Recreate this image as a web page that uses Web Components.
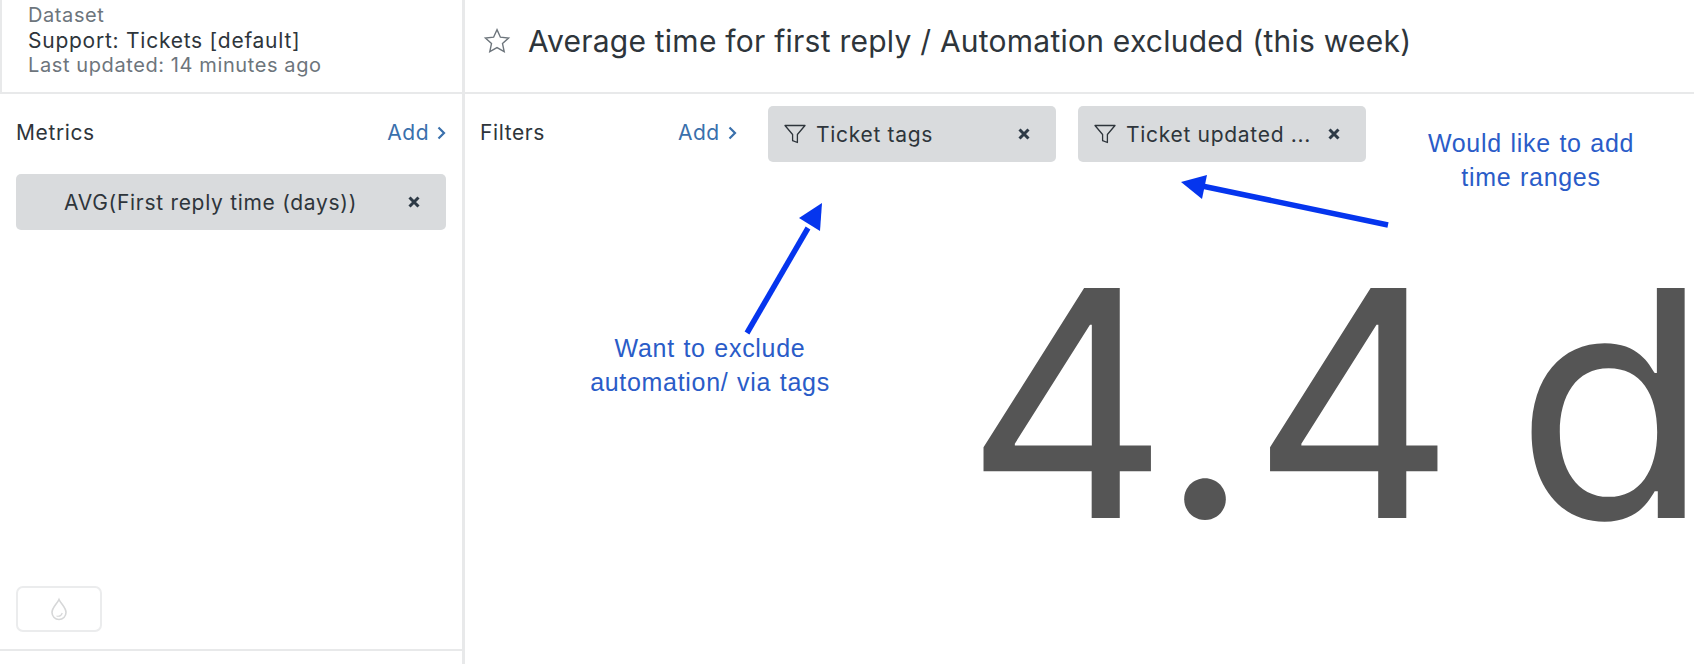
<!DOCTYPE html>
<html>
<head>
<meta charset="utf-8">
<style>
  html, body { margin: 0; height: 100%; background: #fff; overflow: hidden; }
  body { font-family: Inter, "Noto Sans", sans-serif; color: #2e353b; }
</style>
</head>
<body>
<query-page>
  <dataset-info slot="dataset"></dataset-info>
  <question-title slot="title">Average time for first reply / Automation excluded (this week)</question-title>
  <metrics-panel slot="side">
    <metric-chip>AVG(First reply time (days))</metric-chip>
  </metrics-panel>
  <filters-bar slot="main">
    <metric-chip filter>Ticket tags</metric-chip>
    <metric-chip filter>Ticket updated ...</metric-chip>
  </filters-bar>
  <big-value slot="main">4.4 d</big-value>
  <note-overlay slot="notes"></note-overlay>
</query-page>

<script>
const pageTpl = document.createElement('template');
pageTpl.innerHTML = `
<style>
  :host { display: grid; position: relative; width: 1694px; height: 664px; overflow: hidden;
    grid-template-columns: 465px 1fr; grid-template-rows: 94px 1fr; }
  .cell { border: 0 solid #e8e9ea; min-width: 0; min-height: 0; }
  .ds { border-width: 0 3px 2px 2px; }
  .ttl { border-bottom-width: 2px; }
  .side { border-right-width: 3px; display: flex; flex-direction: column; }
  .main { display: flex; flex-direction: column; overflow: hidden; }
</style>
<div class="cell ds"><slot name="dataset"></slot></div>
<div class="cell ttl"><slot name="title"></slot></div>
<div class="cell side"><slot name="side"></slot></div>
<div class="cell main"><slot name="main"></slot></div>
<slot name="notes"></slot>
`;
class QueryPage extends HTMLElement {
  constructor() {
    super();
    this.attachShadow({ mode: 'open' });
    this.shadowRoot.appendChild(pageTpl.content.cloneNode(true));
  }
}
customElements.define('query-page', QueryPage);

const datasetTpl = document.createElement('template');
datasetTpl.innerHTML = `
<style>
  :host { display: block; padding: 3px 0 0 26px; }
  div { font-size: 20px; letter-spacing: 0.6px; line-height: 25px; color: #6d757c; white-space: nowrap; }
  .name { font-size: 21px; letter-spacing: 0.75px; color: #2e353b; }
</style>
<div>Dataset</div>
<div class="name">Support: Tickets [default]</div>
<div>Last updated: 14 minutes ago</div>
`;
class DatasetInfo extends HTMLElement {
  constructor() {
    super();
    this.attachShadow({ mode: 'open' });
    this.shadowRoot.appendChild(datasetTpl.content.cloneNode(true));
  }
}
customElements.define('dataset-info', DatasetInfo);

const titleTpl = document.createElement('template');
titleTpl.innerHTML = `
<style>
  :host { display: flex; align-items: center; height: 82px; padding-left: 18px; gap: 17px; }
  svg { width: 28px; height: 28px; flex: none; }
  span { font-size: 30px; letter-spacing: 0.24px; color: #2e353b; white-space: nowrap; }
</style>
<svg viewBox="0 0 28 28" fill="none" stroke="#6d757c" stroke-width="1.4" stroke-linejoin="miter">
  <path d="M14 2.600l3.400 7.600 8.200.9-6.100 5.500 1.700 8.100-7.200-4.100-7.200 4.100 1.700-8.100-6.100-5.500 8.200-.9z"/>
</svg>
<span><slot></slot></span>
`;
class QuestionTitle extends HTMLElement {
  constructor() {
    super();
    this.attachShadow({ mode: 'open' });
    this.shadowRoot.appendChild(titleTpl.content.cloneNode(true));
  }
}
customElements.define('question-title', QuestionTitle);

const addTpl = document.createElement('template');
addTpl.innerHTML = `
<style>
  :host { display: inline-flex; align-items: center; gap: 8px; font-size: 21px; letter-spacing: 0.5px; color: #3a70ac; }
  svg { width: 9px; height: 14px; margin-top: 2px; }
</style>
<span>Add</span>
<svg viewBox="0 0 9 14" fill="none" stroke="#3a70ac" stroke-width="2.2"><path d="M1.500 1.500L7 7l-5.500 5.500"/></svg>
`;
class AddLink extends HTMLElement {
  constructor() {
    super();
    this.attachShadow({ mode: 'open' });
    this.shadowRoot.appendChild(addTpl.content.cloneNode(true));
  }
}
customElements.define('add-link', AddLink);

const chipTpl = document.createElement('template');
chipTpl.innerHTML = `
<style>
  :host { display: flex; align-items: center; height: 56px; box-sizing: border-box; background: #d9dbdd;
    border-radius: 5px; padding: 0 26px 0 16px; font-size: 21px; letter-spacing: 0.7px; color: #2e353b; white-space: nowrap; }
  .label { flex: 1; }
  svg.funnel { width: 22px; height: 22px; margin-right: 10px; flex: none; }
  svg.close { width: 12px; height: 12px; flex: none; }
  :host(:not([filter])) { padding-left: 48px; }
  :host(:not([filter])) svg.funnel { display: none; }
</style>
<svg class="funnel" viewBox="0 0 22 22" fill="none" stroke="#2e353b" stroke-width="1.3" stroke-linejoin="round">
  <path d="M1 2.500h20l-7.600 9v8l-4.800-1.800v-6.200z"/>
</svg>
<span class="label"><slot></slot></span>
<svg class="close" viewBox="0 0 12 12" stroke="#2e3a46" stroke-width="3"><path d="M1.500 1.500l9 9M10.500 1.500l-9 9"/></svg>
`;
class MetricChip extends HTMLElement {
  constructor() {
    super();
    this.attachShadow({ mode: 'open' });
    this.shadowRoot.appendChild(chipTpl.content.cloneNode(true));
  }
}
customElements.define('metric-chip', MetricChip);

const metricsTpl = document.createElement('template');
metricsTpl.innerHTML = `
<style>
  :host { display: flex; flex-direction: column; flex: 1; }
  .top { flex: 1; padding: 0 16px; display: flex; flex-direction: column; }
  .head { display: flex; justify-content: space-between; align-items: center; height: 76px; margin-bottom: 4px;
    font-size: 21px; letter-spacing: 0.6px; }
  .fill { flex: 1; }
  button { display: flex; align-items: center; justify-content: center; width: 86px; height: 46px; padding: 0;
    background: #fff; border: 2px solid #ebeced; border-radius: 7px; margin-bottom: 17px; }
  svg { width: 18px; height: 24px; }
  .foot { height: 13px; border-top: 2px solid #e8e9ea; }
</style>
<div class="top">
  <div class="head"><span>Metrics</span><add-link></add-link></div>
  <div class="chips"><slot></slot></div>
  <div class="fill"></div>
  <button aria-label="Theme">
    <svg viewBox="0 0 18 24" fill="none" stroke="#d6d7d8" stroke-width="1.600">
      <path d="M9 2.500C7 7 2 10.500 2 15.500a7 7 0 0 0 14 0C16 10.500 11 7 9 2.500z"/>
      <path d="M6.500 19c2.500.6 5-.6 5.800-3" stroke-width="1.100"/>
    </svg>
  </button>
</div>
<div class="foot"></div>
`;
class MetricsPanel extends HTMLElement {
  constructor() {
    super();
    this.attachShadow({ mode: 'open' });
    this.shadowRoot.appendChild(metricsTpl.content.cloneNode(true));
  }
}
customElements.define('metrics-panel', MetricsPanel);

const filtersTpl = document.createElement('template');
filtersTpl.innerHTML = `
<style>
  :host { display: flex; align-items: flex-start; padding: 12px 0 0 15px; height: 56px; flex: none; }
  .label { width: 198px; height: 52px; display: flex; align-items: center; font-size: 21px; letter-spacing: 0.6px; }
  add-link { height: 52px; width: 90px; }
  ::slotted(metric-chip) { width: 288px; margin-right: 22px; flex: none; }
</style>
<div class="label">Filters</div>
<add-link></add-link>
<slot></slot>
`;
class FiltersBar extends HTMLElement {
  constructor() {
    super();
    this.attachShadow({ mode: 'open' });
    this.shadowRoot.appendChild(filtersTpl.content.cloneNode(true));
  }
}
customElements.define('filters-bar', FiltersBar);

const bigTpl = document.createElement('template');
bigTpl.innerHTML = `
<style>
  :host { display: block; flex: 1; padding: 83px 0 0 500px; }
  div { font-family: Inter, "Liberation Sans", sans-serif; font-size: 316px; line-height: 316px; color: #555;
    white-space: pre; letter-spacing: 1px; word-spacing: -31px; }
</style>
<div><slot></slot></div>
`;
class BigValue extends HTMLElement {
  constructor() {
    super();
    this.attachShadow({ mode: 'open' });
    this.shadowRoot.appendChild(bigTpl.content.cloneNode(true));
  }
}
customElements.define('big-value', BigValue);

const notesTpl = document.createElement('template');
notesTpl.innerHTML = `
<style>
  :host { position: absolute; inset: 0; pointer-events: none; display: block; }
  svg { position: absolute; inset: 0; width: 100%; height: 100%; }
  .note { position: absolute; transform: translateX(-50%); text-align: center; white-space: nowrap;
    font-family: "Liberation Sans", Arial, sans-serif; font-size: 25px; letter-spacing: 0.7px; word-spacing: 1px;
    line-height: 34px; color: #2a5cc8; }
</style>
<svg viewBox="0 0 1694 664">
  <g stroke="#0535ee" stroke-width="5.500" fill="#0535ee">
    <path d="M747 333L808 228"/>
    <path d="M1388 225L1202 186"/>
    <path stroke="none" d="M822 203L820 231 799 218z"/>
    <path stroke="none" d="M1181 182L1207 175 1202 199z"/>
  </g>
</svg>
<div class="note" style="left:710px;top:331px">Want to exclude<br>automation/ via tags</div>
<div class="note" style="left:1531px;top:126px">Would like to add<br>time ranges</div>
`;
class NoteOverlay extends HTMLElement {
  constructor() {
    super();
    this.attachShadow({ mode: 'open' });
    this.shadowRoot.appendChild(notesTpl.content.cloneNode(true));
  }
}
customElements.define('note-overlay', NoteOverlay);
</script>
</body>
</html>
